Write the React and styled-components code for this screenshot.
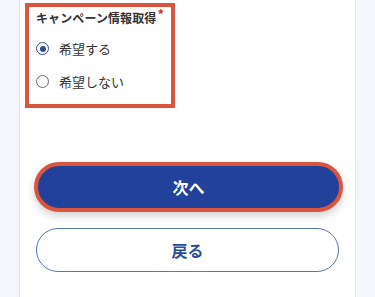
import React, { useState } from "react";
import styled, { createGlobalStyle } from "styled-components";

const GlobalStyle = createGlobalStyle`
  html, body {
    margin: 0;
    padding: 0;
    background: #f4f6fb;
    font-family: "Noto Sans CJK JP", "Noto Sans", sans-serif;
  }
`;

const Page = styled.div`
  padding: 0 20px;
  height: 297px;
  overflow: hidden;
`;

const Card = styled.div`
  background: #ffffff;
  height: 100%;
  box-shadow: 0 0 0 1px #e4e7ee;
  padding: 3px 0 0 5px;
  box-sizing: border-box;
`;

const FieldBox = styled.div`
  width: 150px;
  box-sizing: border-box;
  border: 4px solid #d9553e;
  padding: 3px 4px 6px 7px;
`;

const Label = styled.div`
  font-size: 12px;
  line-height: 16px;
  font-weight: 700;
  color: #333;
  white-space: nowrap;
  letter-spacing: 0.1px;

  sup {
    color: #c8302b;
    font-size: 13px;
    font-weight: 700;
    line-height: 0;
    margin-left: 1px;
    position: relative;
    top: 1px;
  }
`;

const Option = styled.label`
  display: flex;
  align-items: center;
  height: 33px;
  gap: 10px;
  font-size: 13px;
  color: #333;
  cursor: pointer;

  &:first-of-type {
    margin-top: 6px;
  }
`;

const Radio = styled.span`
  width: 13px;
  height: 13px;
  box-sizing: border-box;
  border-radius: 50%;
  border: 1.5px solid ${(p) => (p.$checked ? "#2b4a9b" : "#666")};
  display: flex;
  align-items: center;
  justify-content: center;

  &::after {
    content: "";
    width: 6px;
    height: 6px;
    border-radius: 50%;
    background: ${(p) => (p.$checked ? "#2b4a9b" : "transparent")};
  }
`;

const Actions = styled.div`
  display: flex;
  flex-direction: column;
  align-items: center;
  gap: 16px;
  margin: 54px 0 0 -5px;
`;

const PrimaryButton = styled.button`
  width: 309px;
  height: 50px;
  margin-left: 2px;
  border-radius: 25px;
  border: 4.5px solid #d9553e;
  background: #21419a;
  color: #fff;
  font-family: inherit;
  font-size: 16px;
  font-weight: 700;
  box-shadow: 0 4px 8px rgba(0, 0, 0, 0.18);
  cursor: pointer;
`;

const SecondaryButton = styled.button`
  width: 303px;
  height: 44px;
  border-radius: 22px;
  border: 1px solid #5676b0;
  background: #fff;
  color: #2a4c9c;
  font-family: inherit;
  font-size: 16px;
  font-weight: 700;
  cursor: pointer;
`;

export default function App() {
  const [wish, setWish] = useState("yes");

  return (
    <>
      <GlobalStyle />
      <Page>
        <Card>
          <FieldBox>
            <Label>
              キャンペーン情報取得<sup>*</sup>
            </Label>
            <Option onClick={() => setWish("yes")}>
              <Radio $checked={wish === "yes"} />
              希望する
            </Option>
            <Option onClick={() => setWish("no")}>
              <Radio $checked={wish === "no"} />
              希望しない
            </Option>
          </FieldBox>
          <Actions>
            <PrimaryButton>次へ</PrimaryButton>
            <SecondaryButton>戻る</SecondaryButton>
          </Actions>
        </Card>
      </Page>
    </>
  );
}
